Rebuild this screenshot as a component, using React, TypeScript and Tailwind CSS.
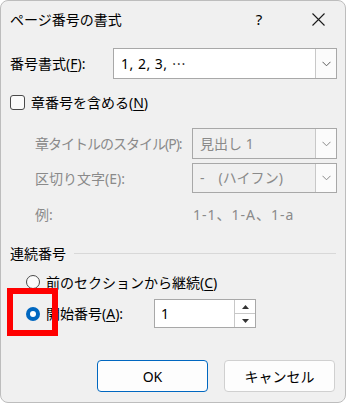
import React from 'react';

const font = { fontFamily: '"Noto Sans", "Noto Sans CJK JP", sans-serif' };

const Chevron: React.FC<{ dim?: boolean }> = ({ dim }) => (
  <svg width="9" height="6" viewBox="0 0 9 6">
    <path d="M0.5 0.8 L4.5 4.8 L8.5 0.8" fill="none" stroke={dim ? '#8a8a8a' : '#5c5c5c'} strokeWidth="1" />
  </svg>
);

const Combo: React.FC<{ value: React.ReactNode; disabled?: boolean; className: string }> = ({ value, disabled, className }) => (
  <div className={`flex border border-[#a8a8a8] ${disabled ? 'bg-[#f0f0f0] text-[#8a8a8a]' : 'bg-white text-black'} ${className}`}>
    <div className="flex-1 flex items-center pl-[7px] text-[14px] leading-none">{value}</div>
    <div className="w-[21px] flex items-center justify-center border-l border-[#c8c8c8] bg-[#fbfbfb]">
      <Chevron dim={disabled} />
    </div>
  </div>
);

const U: React.FC<{ c: string }> = ({ c }) => <span className="underline underline-offset-2">{c}</span>;

export default function App() {
  return (
    <div className="w-[347px] h-[404px] bg-white" style={font}>
      <div className="relative w-[346px] h-[403px] bg-[#f0f0f0] border border-[#bdbdbd] rounded-[8px] flex flex-col text-[14px] text-black">
        {/* title bar */}
        <div className="h-[36px] flex items-center pl-[9px]">
          <span className="flex-1 text-[14px]">ページ番号の書式</span>
          <span className="w-[20px] text-center mr-[43px] text-[15px]">?</span>
          <svg width="13" height="13" viewBox="0 0 13 13" className="mr-[20px]">
            <path d="M0.5 0.5 L12.5 12.5 M12.5 0.5 L0.5 12.5" stroke="#1a1a1a" strokeWidth="1.1" />
          </svg>
        </div>

        <div className="mt-[11px] h-[31px] flex items-center pl-[9px]">
          <span className="w-[103px]">番号書式(<U c="F" />):</span>
          <Combo
            value={<span className="tracking-[0.5px]">1, 2, 3, <span className="font-['Noto_Sans_CJK_JP']">⋯</span></span>}
            className="w-[224px] h-[31px]"
          />
        </div>

        <div className="mt-[12px] h-[22px] flex items-center pl-[9px]">
          <div className="w-[15px] h-[15px] border border-[#4a4a4a] rounded-[3px] bg-[#fbfbfb]" />
          <span className="ml-[6px]">章番号を含める(<U c="N" />)</span>
        </div>

        <div className="mt-[15px] h-[31px] flex items-center pl-[34px] text-[#8a8a8a]">
          <span className="w-[157px] tracking-[-1px] whitespace-nowrap">章タイトルのスタイル(P):</span>
          <Combo value="見出し 1" disabled className="w-[145px] h-[31px]" />
        </div>

        <div className="mt-[4px] h-[30px] flex items-center pl-[34px] text-[#8a8a8a]">
          <span className="w-[157px]">区切り文字(E):</span>
          <Combo value="-　(ハイフン)" disabled className="w-[145px] h-[30px]" />
        </div>

        <div className="mt-[10px] h-[22px] flex items-center pl-[34px] text-[#8a8a8a]">
          <span className="w-[158px]">例:</span>
          <span className="tracking-[1px]">1-1、1-A、1-a</span>
        </div>

        <div className="mt-[17px] h-[22px] flex items-center pl-[9px] pr-[9px]">
          <span>連続番号</span>
          <div className="flex-1 ml-[8px] h-px bg-[#d8d8d8]" />
        </div>

        <div className="mt-[7px] h-[22px] flex items-center pl-[25px]">
          <div className="w-[14px] h-[14px] rounded-full border border-[#4a4a4a] bg-[#fbfbfb]" />
          <span className="ml-[6px]">前のセクションから継続(<U c="C" />)</span>
        </div>

        <div className="mt-[6px] h-[29px] flex items-center pl-[25px]">
          <div className="w-[14px] h-[14px] rounded-full bg-[#0067c0] flex items-center justify-center">
            <div className="w-[6px] h-[6px] rounded-full bg-white" />
          </div>
          <span className="ml-[6px] w-[108px]">開始番号(<U c="A" />):</span>
          <div className="w-[102px] h-[29px] flex border border-[#a8a8a8] bg-white">
            <div className="flex-1 flex items-center pl-[6px]">1</div>
            <div className="w-[21px] flex flex-col border-l border-[#c8c8c8]">
              <div className="flex-1 flex items-center justify-center border-b border-[#c8c8c8]">
                <svg width="7" height="4" viewBox="0 0 7 4"><path d="M0 4 L3.5 0 L7 4 Z" fill="#333" /></svg>
              </div>
              <div className="flex-1 flex items-center justify-center">
                <svg width="7" height="4" viewBox="0 0 7 4"><path d="M0 0 L3.5 4 L7 0 Z" fill="#333" /></svg>
              </div>
            </div>
          </div>
        </div>

        <div className="mt-[32px] h-[32px] flex justify-end gap-[16px] pr-[10px]">
          <button className="w-[111px] h-[32px] rounded-[4px] bg-[#fdfdfd] border border-[#0067c0] text-[14px]">OK</button>
          <button className="w-[111px] h-[32px] rounded-[4px] bg-[#fdfdfd] border border-[#d0d0d0] text-[14px]">キャンセル</button>
        </div>

        {/* red highlight */}
        <div className="absolute left-[6px] top-[287px] w-[51px] h-[48px] border-[6px] border-[#ff0000]" />
      </div>
    </div>
  );
}
